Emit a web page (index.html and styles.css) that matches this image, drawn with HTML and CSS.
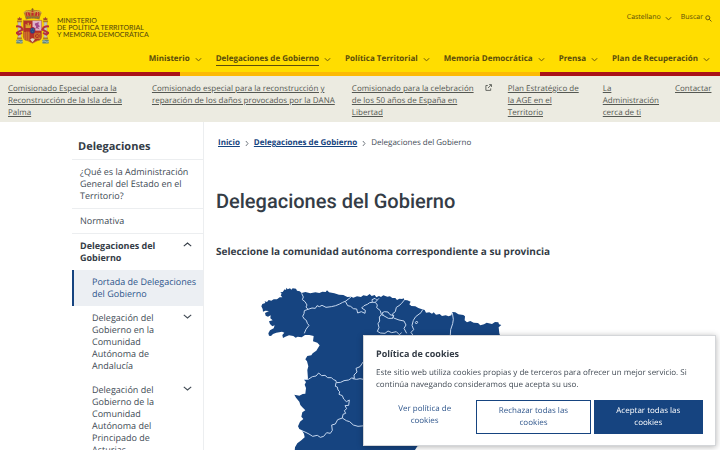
FILE: index.html
```html
<!DOCTYPE html>
<html lang="es">
<head>
<meta charset="utf-8">
<meta name="viewport" content="width=device-width, initial-scale=1">
<title>Delegaciones del Gobierno</title>
<link rel="stylesheet" href="styles.css">
</head>
<body>
<svg class="defs" width="0" height="0" aria-hidden="true">
  <symbol id="chevron" viewBox="0 0 8 8"><path d="M1 2.5 Q2.5 4.8 4 5.2 Q5.5 4.8 7 2.5" /></symbol>
  <symbol id="crumb" viewBox="0 0 8 8"><path d="M2.5 .7 L5.3 4 L2.5 7.3" /></symbol>
  <symbol id="caret" viewBox="0 0 8 8"><path d="M.7 2.5 L4 5.3 L7.3 2.5" /></symbol>
</svg>

<header class="header">
  <div class="header-top">
    <a class="brand" href="#">
      <svg class="arms" viewBox="0 0 100 108" aria-hidden="true">
        <path d="M29 29 L23 13 Q30 4 43 6 L50 2 L57 6 Q71 4 78 13 L72 29Z" fill="#b6812c"/>
        <path d="M31 23 Q28 12 37 10 Q43 13 43 24 M58 24 Q58 12 65 10 Q73 12 70 23" fill="#c5232c"/>
        <path d="M47 24 V9 H53 V24Z" fill="#c5232c"/>
        <path d="M23 13 Q34 5 50 13 Q67 5 78 13 M37 25 Q33 16 37 9 M64 25 Q68 16 64 9" fill="none" stroke="#e7c55c" stroke-width="2"/>
        <path d="M50 0 V8 M47 3 H53" stroke="#795522" stroke-width="2"/>
        <path d="M28 25 Q50 19 73 25 L71 34 Q50 29 30 34Z" fill="#a96e27"/>
        <path d="M33 29 H68" stroke="#3f8572" stroke-width="3" stroke-dasharray="3 5"/>
        <path d="M22 37 H78 V87 Q77 98 64 99 L50 106 L36 99 Q23 98 22 87Z" fill="#b43127" stroke="#b6812c" stroke-width="2"/>
        <path d="M50 38 H77 V68 H50Z" fill="#ddb4c8"/>
        <path d="M56 63 Q65 57 58 52 Q55 45 62 45 L69 42 L68 50 L73 55 L67 58 L71 64 L63 61Z" fill="#a4478a"/>
        <path d="M29 60 V48 H32 V52 H35 V44 H39 V52 H42 V48 H45 V60Z" fill="#d8a22d"/>
        <path d="M27 72 V95 M33 71 V98 M39 71 V99" stroke="#dc9d29" stroke-width="3"/>
        <path d="M56 76 H73 V92 H56Z M56 76 L73 92 M73 76 L56 92" fill="none" stroke="#d6912a" stroke-width="2"/>
        <path d="M43 95 Q50 87 57 95 L50 103Z" fill="#dfd7ba"/>
        <ellipse cx="50" cy="68" rx="9" ry="11" fill="#b02138"/>
        <ellipse cx="50" cy="68" rx="7" ry="9" fill="#284a85"/>
        <path d="M47 64 H48 M53 64 H54 M50 71 H51" stroke="#e4c349" stroke-width="2"/>
        <path d="M6 40 H15 V93 H6Z M85 40 H94 V93 H85Z" fill="#c7c5bc" stroke="#8a8777"/>
        <path d="M3 37 H18 V43 H3Z M82 37 H97 V43 H82Z M3 89 H18 V94 H3Z M82 89 H97 V94 H82Z" fill="#b17a27"/>
        <path d="M5 36 V29 L8 31 L11 26 L14 31 L17 29 V36Z M83 36 V29 L86 31 L89 26 L92 31 L95 29 V36Z" fill="#a6472c"/>
        <path d="M0 58 Q2 51 16 58 L20 65 Q12 69 2 75 L8 80 L18 75 M100 58 Q98 51 84 58 L80 65 Q88 69 98 75 L92 80 L82 75" fill="none" stroke="#b8303a" stroke-width="6"/>
        <path d="M1 96 H20 V107 H1Z M80 96 H99 V107 H80Z" fill="#62877d"/>
        <path d="M1 101 Q6 97 10 101 T20 101 M80 101 Q85 97 89 101 T99 101" fill="none" stroke="#d6e2da" stroke-width="2"/>
      </svg>
      <span class="brand-name">MINISTERIO<br>DE POLÍTICA TERRITORIAL<br>Y MEMORIA DEMOCRÁTICA</span>
    </a>
    <div class="tools">
      <button type="button">Castellano <svg class="icon"><use href="#chevron"/></svg></button>
      <button type="button" class="search">Buscar <svg class="icon" viewBox="0 0 8 8"><circle cx="3.2" cy="3.2" r="2.3"/><path d="M5 5 L7.4 7.4"/></svg></button>
    </div>
  </div>
  <nav class="nav" aria-label="Principal">
    <a href="#"><span>Ministerio</span><svg class="icon"><use href="#chevron"/></svg></a>
    <a href="#" class="current"><span>Delegaciones de Gobierno</span><svg class="icon"><use href="#chevron"/></svg></a>
    <a href="#"><span>Política Territorial</span><svg class="icon"><use href="#chevron"/></svg></a>
    <a href="#"><span>Memoria Democrática</span><svg class="icon"><use href="#chevron"/></svg></a>
    <a href="#"><span>Prensa</span><svg class="icon"><use href="#chevron"/></svg></a>
    <a href="#"><span>Plan de Recuperación</span><svg class="icon"><use href="#chevron"/></svg></a>
  </nav>
</header>
<div class="flag"></div>

<nav class="links" aria-label="Enlaces destacados">
  <a href="#">Comisionado Especial para la Reconstrucción de la Isla de La Palma</a>
  <a href="#">Comisionado especial para la reconstrucción y reparación de los daños provocados por la DANA</a>
  <a href="#" class="external"><span>Comisionado para la celebración de los 50 años de España en Libertad</span><svg class="icon" viewBox="0 0 8 8"><path d="M3.2 1.7 H1 V7.3 H6.5 V5 M4.7 .7 H7.4 V3.4 M7.2 .9 L3.5 4.6"/></svg></a>
  <a href="#">Plan Estratégico de la AGE en el Territorio</a>
  <a href="#">La Administración cerca de ti</a>
  <a href="#">Contactar</a>
</nav>

<div class="page">
  <aside class="sidebar">
    <h2>Delegaciones</h2>
    <ul class="menu">
      <li><a href="#">¿Qué es la Administración General del Estado en el Territorio?</a></li>
      <li><a href="#">Normativa</a></li>
      <li><a href="#" class="open"><span>Delegaciones del Gobierno</span><svg class="caret up"><use href="#caret"/></svg></a>
        <ul class="submenu">
          <li><a href="#" class="selected">Portada de Delegaciones del Gobierno</a></li>
          <li><a href="#"><span>Delegación del Gobierno en la Comunidad Autónoma de Andalucía</span><svg class="caret"><use href="#caret"/></svg></a></li>
          <li><a href="#"><span>Delegación del Gobierno de la Comunidad Autónoma del Principado de Asturias</span><svg class="caret"><use href="#caret"/></svg></a></li>
        </ul>
      </li>
    </ul>
  </aside>

  <main class="content">
    <nav class="crumbs" aria-label="Ruta">
      <a href="#">Inicio</a><svg class="icon"><use href="#crumb"/></svg>
      <a href="#">Delegaciones de Gobierno</a><svg class="icon"><use href="#crumb"/></svg>
      <span>Delegaciones del Gobierno</span>
    </nav>
    <h1>Delegaciones del Gobierno</h1>
    <h3>Seleccione la comunidad autónoma correspondiente a su provincia</h3>
    <svg class="map" viewBox="0 0 840 600" role="img" aria-label="Mapa de España">
      <path class="land" d="M64 109 L67 102 L76 99 L74 94 L81 96 L86 90 L94 92 L101 88 L111 88 L119 82 L127 82 L122 76 L125 71 L121 67 L128 66 L134 58 L138 60 L139 53 L143 58 L150 55 L154 59 L158 55 L168 56 L171 62 L179 64 L185 69 L196 66 L211 70 L226 67 L238 69 L247 65 L257 66 L261 61 L267 67 L283 70 L297 74 L310 75 L322 81 L333 80 L340 83 L351 79 L363 81 L370 76 L381 78 L389 72 L395 78 L404 75 L409 82 L417 78 L423 81 L430 76 L442 80 L450 79 L457 84 L466 84 L471 90 L478 86 L487 87 L490 84 L493 90 L502 91 L512 95 L508 103 L514 108 L526 109 L535 114 L546 118 L554 120 L558 128 L568 127 L576 131 L581 127 L588 134 L599 132 L606 138 L617 136 L626 139 L634 136 L637 126 L646 127 L655 133 L670 135 L675 139 L674 151 L681 157 L691 153 L701 158 L714 159 L721 166 L732 163 L740 158 L756 162 L765 156 L775 157 L777 163 L784 165 L776 172 L778 190 L782 202 L755 230 L710 255 L675 280 L630 330 L610 370 L595 410 L621 440 L594 473 L575 493 L578 523 L552 526 L532 529 L525 540 L510 543 L494 575 L455 590 H160 L165 532 L172 520 L184 511 L194 502 L192 492 L186 481 L178 477 L174 469 L180 455 L190 447 L184 440 L187 427 L196 421 L187 412 L181 405 L178 395 L168 383 L163 374 L178 377 L188 372 L196 371 L198 354 L194 344 L198 336 L192 329 L204 326 L202 300 L205 289 L201 274 L196 268 L202 258 L214 256 L218 250 L229 242 L239 226 L232 218 L219 214 L221 198 L208 195 L195 195 L185 202 L173 200 L167 203 L160 198 L147 196 L136 200 L129 204 L127 195 L133 188 L126 185 L109 188 L99 192 L93 198 L87 197 L85 190 L90 181 L101 175 L104 166 L97 169 L90 162 L87 154 L98 151 L91 145 L92 136 L84 140 L77 137 L75 129 L87 123 L76 122 L69 125 L68 117Z"/>
      <g class="borders">
        <path d="M185 70 L190 81 L187 89 L195 95 L201 105 L198 111 L204 118 L193 122 L192 131 L188 139 L193 147 L199 151 L202 160 L207 166 L198 178 L193 190"/>
        <path d="M204 118 L216 114 L226 115 L231 107 L238 110 L246 106 L258 112 L274 110 L287 107 L299 102 L308 97 L316 94 L324 88 L333 81"/>
        <path d="M316 94 L323 107 L332 109 L340 116 L350 117 L353 129 L364 125 L375 130 L376 121 L365 114 L372 107 L382 103 L389 98 L397 97 L396 89 L405 85 L411 91 L406 97 L397 97 M411 91 L417 85 M406 97 L412 105 L410 113 L421 122 L424 134 L431 137 L426 129 L433 125 L444 126 L450 134 L461 137 L458 145 L445 145 L431 137 M424 134 L418 141 L419 153 L414 161 L417 173 L412 184 L421 189 L435 190 L444 183 L455 188 L469 185 L478 194 L485 188"/>
        <path d="M493 90 L484 101 L477 107 L469 112 L466 125 L457 132 L461 137 L458 145 M461 144 L477 150 L492 153 L498 165 L492 175 L500 190 M548 119 L543 128 L527 140 L520 151 L516 166 L521 179 L513 187 L521 199 M526 158 L530 153 L533 157 L529 162Z"/>
        <path d="M637 128 L640 148 L638 161 L632 179 L631 195 L620 225"/>
        <path d="M192 329 L205 328 L217 320 L228 318 L236 309 L245 317 L255 316 L263 323 L274 323 L281 329 L288 332 L289 338 L302 337 L312 332 L326 330 L335 324 L343 325 L342 315 L351 306 L348 295 L360 290 L370 275 M338 326 L350 328 L360 326 L375 329"/>
        <path d="M288 338 L286 349 L292 351 L294 360 L299 365 L297 373 L307 377 L311 387 L319 395 L328 390 L326 406 L315 407 L320 416 L313 422 L317 430 L309 433 L307 444 L293 449 L286 462 L275 465 L277 481 L271 490 L260 488 L251 499 L241 502 L232 496 L218 499 L207 492 L195 486 L185 482 M307 444 L319 452 L329 455 L340 465 L354 469 L375 467"/>
      </g>
    </svg>
  </main>
</div>

<section class="cookies" role="dialog" aria-labelledby="cookies-title">
  <h2 id="cookies-title">Política de cookies</h2>
  <p>Este sitio web utiliza cookies propias y de terceros para ofrecer un mejor servicio. Si continúa navegando consideramos que acepta su uso.</p>
  <div class="actions">
    <a href="#">Ver política de cookies</a>
    <button type="button">Rechazar todas las cookies</button>
    <button type="button" class="primary">Aceptar todas las cookies</button>
  </div>
</section>
</body>
</html>
```
FILE: styles.css
```css
* { box-sizing: border-box; }

body {
  margin: 0;
  font: 8px/12px "Open Sans", "Noto Sans", sans-serif;
  text-rendering: geometricPrecision;
  color: #424b55;
  background: #fff;
}

a { color: inherit; }
h1, h2, h3, p, ul { margin: 0; padding: 0; }
ul { list-style: none; }
button { font: inherit; text-rendering: inherit; color: inherit; background: none; border: 0; padding: 0; }

.defs { position: absolute; }
svg { flex: none; }

.icon, .caret {
  width: 7px;
  height: 7px;
  fill: none;
  stroke: currentColor;
  stroke-width: 1;
}
.caret { width: 9px; height: 9px; }
.up { transform: rotate(180deg); }

/* Header */
.header {
  background: #ffdd00;
  color: #5a4c0c;
  padding: 8px 10px 6px 16px;
}
.header-top { display: flex; justify-content: space-between; align-items: flex-start; }
.brand { display: flex; align-items: center; gap: 8px; text-decoration: none; }
.arms { width: 33px; height: 36px; }
.brand-name { font: 500 7px/7px Lato, sans-serif; padding-top: 4px; }
.tools { display: flex; gap: 9px; padding-top: 4px; font-size: 7px; }
.tools button { display: flex; align-items: center; gap: 4px; }
.tools .search { gap: 2px; margin-right: -2px; }

.nav {
  display: flex;
  justify-content: flex-end;
  gap: 14px;
  padding-top: 9px;
  font-weight: 700;
}
.nav a { display: flex; align-items: center; gap: 5px; text-decoration: none; }
.nav span { border-bottom: 1px solid transparent; }
.nav .current span { border-color: currentColor; }

.flag {
  height: 4px;
  background: linear-gradient(90deg, #a91319 25%, #fcba05 25% 75%, #a91319 75%);
}

.links {
  display: grid;
  grid-template-columns: 128fr 184fr 140fr 79fr 56fr 37fr;
  column-gap: 16px;
  padding: 7px 8px 3px;
  background: #ecebe1;
  color: #555852;
}
.links .external { display: flex; justify-content: space-between; text-decoration: none; }
.external span { max-width: 128px; text-decoration: underline; }
.external .icon { margin-top: 1px; }

/* Page body */
.page { display: grid; grid-template-columns: 132px 1fr; padding-left: 10%; }

.sidebar { border-right: 1px solid #eceef0; font-size: 9px; }
.sidebar h2 {
  padding: 17px 6px 5px;
  font-size: 11px;
  line-height: 15px;
  color: #343c46;
  border-bottom: 1px solid #eceef0;
}
.menu a {
  display: flex;
  justify-content: space-between;
  gap: 12px;
  padding: 6px 11px 6px 8px;
  border-bottom: 1px solid #eceef0;
  text-decoration: none;
}
.menu .open { font-weight: 700; color: #343c46; border-bottom: 0; }
.menu .open span { max-width: 80px; }
.menu .submenu a { padding: 6px 11px 6px 20px; border-bottom: 0; }
.submenu span { max-width: 72px; }
.menu .submenu .selected {
  padding: 6px 4px 6px 18px;
  border-left: 2px solid #164480;
  background: #eceff3;
  color: #2f568c;
}

.content { padding: 15px 12px 0; }
.crumbs { display: flex; align-items: center; gap: 4px; padding-left: 2px; }
.crumbs a { font-weight: 700; color: #164480; }
.crumbs .icon { width: 6px; }
h1 {
  margin-top: 37px;
  font: 500 20px/30px Roboto, sans-serif;
  color: #343c46;
}
h3 { margin-top: 28px; font-size: 10px; line-height: 14px; color: #343c46; }

.map { display: block; width: 280px; margin: 12px 0 0 24px; }
.land { fill: #164480; }
.borders { fill: none; stroke: #c5d7ef; stroke-width: 3; stroke-linejoin: round; }

/* Cookie notice */
.cookies {
  position: fixed;
  right: 4px;
  bottom: 4px;
  width: 353px;
  max-width: 100%;
  padding: 12px 12px 11px;
  background: #fff;
  border: 1px solid #d4d6d9;
  box-shadow: 0 1px 6px rgba(0, 0, 0, .3);
}
.cookies h2 { font-size: 9px; line-height: 12px; color: #343c46; }
.cookies p { margin-top: 7px; }
.actions {
  display: grid;
  grid-template-columns: 97fr 114fr 109fr;
  gap: 3px;
  margin-top: 9px;
  text-align: center;
  color: #2f568c;
}
.actions a { padding: 3px 16px; text-decoration: none; }
.actions button { padding: 4px 16px; border: 1px solid #164480; line-height: 12px; }
.actions .primary { background: #164480; border-color: #164480; color: #fff; }
```
